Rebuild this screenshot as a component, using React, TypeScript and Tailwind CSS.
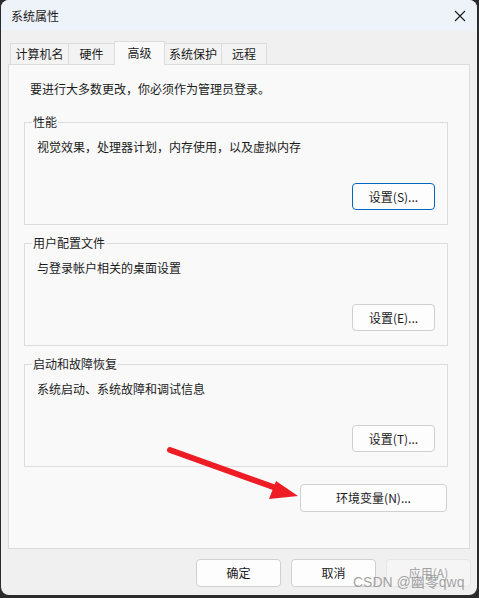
import React from "react";

const font = "font-['Noto_Sans_CJK_SC','Noto_Sans',sans-serif]";

function Btn({ label, w, def, disabled }: { label: string; w: string; def?: boolean; disabled?: boolean }) {
  const base = "h-[27px] rounded-[4px] flex items-center justify-center text-[12px] leading-[16px] ";
  const style = disabled
    ? "bg-[#f5f5f5] border border-[#e6e6e6] text-[#a0a0a0]"
    : def
    ? "bg-[#fdfdfd] border border-[#0067c0] text-[#1b1b1b]"
    : "bg-[#fdfdfd] border border-[#d0d0d0] text-[#1b1b1b]";
  return <div className={base + style + " " + w}>{label}</div>;
}

function Group({ title, text, btn, def }: { title: string; text: string; btn: string; def?: boolean }) {
  return (
    <div className="ml-[15px] w-[424px] h-[103px] border border-[#dcdcdc] flex flex-col">
      <div className="-mt-[9px] ml-[7px] w-fit px-[1px] bg-[#f9f9f9] text-[12px] leading-[16px] text-[#1b1b1b]">{title}</div>
      <div className="mt-[9px] ml-[12px] text-[12px] leading-[16px] text-[#1b1b1b]">{text}</div>
      <div className="mt-[28px] mr-[12px] self-end">
        <Btn label={btn} w="w-[83px]" def={def} />
      </div>
    </div>
  );
}

export default function App() {
  const tabs = [
    { t: "计算机名", w: "w-[59px]" },
    { t: "硬件", w: "w-[47px]" },
  ];
  const tabs2 = [
    { t: "系统保护", w: "w-[58px]" },
    { t: "远程", w: "w-[46px]" },
  ];
  return (
    <div className={"w-[479px] h-[598px] bg-[#2b2b2b] relative overflow-hidden " + font}>
      <div className="ml-[1px] w-[476px] h-[595px] bg-[#f0f0f0] rounded-[8px] overflow-hidden flex flex-col">
        {/* Title bar */}
        <div className="h-[31px] bg-[#eef2f9] flex items-center justify-between pl-[10px] pr-[10px]">
          <span className="text-[12px] leading-[16px] text-[#1b1b1b]">系统属性</span>
          <svg width="12" height="12" viewBox="0 0 12 12" className="mr-[1px]">
            <path d="M1 1L11 11M11 1L1 11" stroke="#1b1b1b" strokeWidth="1.1" fill="none" />
          </svg>
        </div>
        {/* Tabs */}
        <div className="mt-[10px] ml-[9px] flex items-end h-[23px]">
          {tabs.map((x) => (
            <div
              key={x.t}
              className={"h-[21px] border border-b-0 border-[#dcdcdc] bg-[#f3f3f3] -ml-px first:ml-0 flex items-center justify-center text-[12px] leading-[16px] text-[#1b1b1b] " + x.w}
            >
              {x.t}
            </div>
          ))}
          <div className="relative z-10 -mb-px h-[24px] w-[51px] -ml-px border border-b-0 border-[#dcdcdc] bg-[#f9f9f9] flex items-start justify-center pt-[3px] text-[12px] leading-[16px] text-[#1b1b1b]">
            高级
          </div>
          {tabs2.map((x) => (
            <div
              key={x.t}
              className={"h-[21px] border border-b-0 border-[#dcdcdc] bg-[#f3f3f3] -ml-px flex items-center justify-center text-[12px] leading-[16px] text-[#1b1b1b] " + x.w}
            >
              {x.t}
            </div>
          ))}
        </div>
        {/* Panel */}
        <div className="ml-[7px] w-[462px] h-[485px] border border-[#dcdcdc] bg-[#f9f9f9] flex flex-col pt-[16px]">
          <div className="ml-[21px] text-[12px] leading-[16px] text-[#1b1b1b]">要进行大多数更改，你必须作为管理员登录。</div>
          <div className="mt-[25px]">
            <Group title="性能" text="视觉效果，处理器计划，内存使用，以及虚拟内存" btn="设置(S)..." def />
          </div>
          <div className="mt-[18px]">
            <Group title="用户配置文件" text="与登录帐户相关的桌面设置" btn="设置(E)..." />
          </div>
          <div className="mt-[18px]">
            <Group title="启动和故障恢复" text="系统启动、系统故障和调试信息" btn="设置(T)..." />
          </div>
          <div className="mt-[17px] ml-[291px]">
            <Btn label="环境变量(N)..." w="w-[147px] h-[28px]" />
          </div>
        </div>
        {/* Bottom buttons */}
        <div className="mt-[10px] flex justify-end gap-[10px] pr-[6px]">
          <Btn label="确定" w="w-[85px] !h-[28px]" />
          <Btn label="取消" w="w-[85px] !h-[28px]" />
          <Btn label="应用(A)" w="w-[85px] !h-[28px]" disabled />
        </div>
      </div>
      {/* Red arrow overlay */}
      <svg className="absolute left-0 top-0 pointer-events-none" width="479" height="598" viewBox="0 0 479 598">
        <line x1="170" y1="450" x2="276" y2="488" stroke="#ee1c25" strokeWidth="6" strokeLinecap="round" />
        <polygon points="298,496 276,481 269,499" fill="#ee1c25" />
      </svg>
      {/* Watermark */}
      <div className="absolute left-[353px] top-[573px] text-[14px] leading-[18px] text-[#8c8c8c]/80 font-['Liberation_Sans','Noto_Sans_CJK_SC',sans-serif] whitespace-nowrap">
        CSDN @幽零qwq
      </div>
    </div>
  );
}
